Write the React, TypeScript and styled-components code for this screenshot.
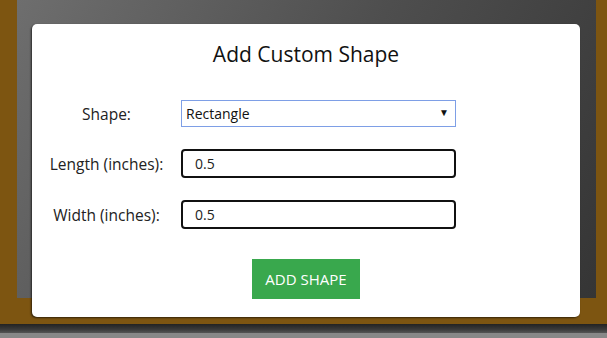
import React from "react";
import styled, { createGlobalStyle } from "styled-components";

const Global = createGlobalStyle`
  html, body { margin: 0; padding: 0; }
  body {
    width: 607px;
    height: 338px;
    overflow: hidden;
    background: #8a8a8a;
    font-family: "Open Sans", "Noto Sans", sans-serif;
  }
`;

const Page = styled.div`
  position: relative;
  width: 607px;
  height: 338px;
  display: flex;
  flex-direction: column;
`;

const Board = styled.div`
  height: 324px;
  background: #7d5511;
  padding-left: 17px;
  box-sizing: border-box;
  flex-shrink: 0;
`;

const Panel = styled.div`
  width: 579px;
  height: 298px;
  background: linear-gradient(120deg, #6e6e6e 0%, #4e4e4e 50%, #353535 100%);
`;

const Strip = styled.div`
  height: 9px;
  background: linear-gradient(180deg, #222 0%, #3a3a3a 60%, #555 100%);
`;

const Rest = styled.div`
  flex: 1;
  background: #888;
`;

const Modal = styled.div`
  position: absolute;
  left: 32px;
  top: 24px;
  width: 548px;
  height: 293px;
  background: #fff;
  border-radius: 5px;
  box-shadow: -1px 1px 2px rgba(0, 0, 0, 0.6);
  box-sizing: border-box;
  display: flex;
  flex-direction: column;
  align-items: stretch;
`;

const Title = styled.h2`
  margin: 0;
  padding-top: 16px;
  height: 44px;
  box-sizing: border-box;
  text-align: center;
  font-weight: 400;
  font-size: 21px;
  line-height: 28px;
  color: #111;
`;

const Form = styled.div`
  display: flex;
  flex-direction: column;
  gap: 22px;
  margin-top: 32px;
`;

const Row = styled.div`
  display: grid;
  grid-template-columns: 149px 275px;
  align-items: center;
`;

const Label = styled.label`
  text-align: center;
  font-size: 15.5px;
  color: #222;
  padding-left: 0;
`;

const SelectWrap = styled.div`
  position: relative;
  width: 275px;
  height: 27px;
`;

const Select = styled.select`
  appearance: none;
  width: 100%;
  height: 100%;
  margin: 0;
  border: 1px solid #7e9fe6;
  border-radius: 0;
  background: #fff;
  padding: 0 0 0 4px;
  font-family: "Open Sans", "Noto Sans", sans-serif;
  font-size: 14px;
  color: #111;
  outline: none;
`;

const Arrow = styled.span`
  position: absolute;
  right: 7px;
  top: 5px;
  font-size: 10px;
  color: #111;
  pointer-events: none;
`;

const Input = styled.input`
  width: 275px;
  height: 29px;
  box-sizing: border-box;
  margin: 0;
  border: 2px solid #111;
  border-radius: 4px;
  padding: 0 0 0 12px;
  font-family: "Open Sans", "Noto Sans", sans-serif;
  font-size: 14px;
  color: #222;
  outline: none;
`;

const ButtonRow = styled.div`
  display: flex;
  justify-content: center;
  margin-top: 30px;
`;

const Button = styled.button`
  width: 108px;
  height: 40px;
  border: none;
  border-radius: 0;
  background: #39a84d;
  color: #fff;
  font-family: "Open Sans", "Noto Sans", sans-serif;
  font-size: 15px;
  text-transform: uppercase;
  cursor: pointer;
`;

export default function App() {
  return (
    <Page>
      <Global />
      <Board>
        <Panel />
      </Board>
      <Strip />
      <Rest />
      <Modal>
        <Title>Add Custom Shape</Title>
        <Form>
          <Row>
            <Label>Shape:</Label>
            <SelectWrap>
              <Select defaultValue="Rectangle">
                <option>Rectangle</option>
                <option>Circle</option>
              </Select>
              <Arrow>▼</Arrow>
            </SelectWrap>
          </Row>
          <Row>
            <Label>Length (inches):</Label>
            <Input defaultValue="0.5" />
          </Row>
          <Row>
            <Label>Width (inches):</Label>
            <Input defaultValue="0.5" />
          </Row>
        </Form>
        <ButtonRow>
          <Button>Add Shape</Button>
        </ButtonRow>
      </Modal>
    </Page>
  );
}
